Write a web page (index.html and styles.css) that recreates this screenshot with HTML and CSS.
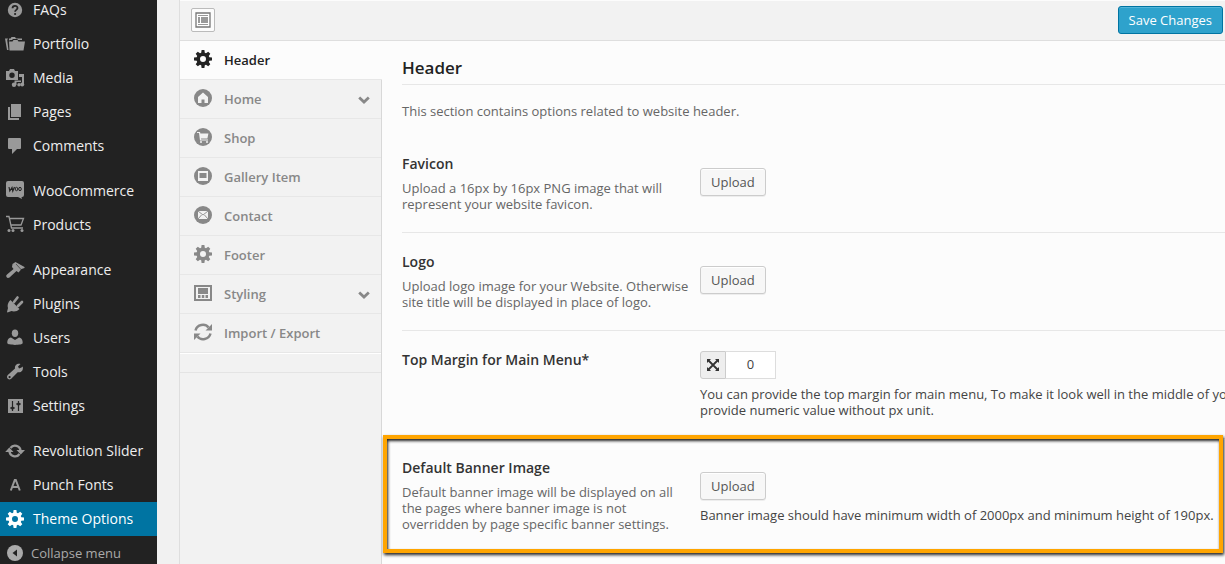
FILE: index.html
```html
<!DOCTYPE html>
<html lang="en">
<head>
<meta charset="utf-8">
<title>Theme Options</title>
<link rel="stylesheet" href="styles.css">
</head>
<body>
<svg class="sprite" aria-hidden="true">
  <symbol id="gear" viewBox="0 0 18 18"><path fill-rule="evenodd" d="M7.6 0h2.8l.4 2.700 1.200.5L14.200 1.700l2.100 2.100-1.500 2.200.5 1.200 2.700.4v2.800l-2.700.4-.5 1.200 1.500 2.200-2.100 2.100-2.200-1.500-1.200.5-.4 2.700H7.600l-.4-2.700-1.200-.5-2.200 1.500-2.100-2.100 1.500-2.200-.5-1.200L0 10.400V7.600l2.700-.4.500-1.200-1.500-2.200 2.100-2.100L6 3.200l1.200-.5zM9 6a3 3 0 1 0 0 6 3 3 0 0 0 0-6z"/></symbol>
  <symbol id="chevron" viewBox="0 0 12 8"><path d="M1.200 1.500 6 6l4.800-4.500" fill="none" stroke="currentColor" stroke-width="2.800"/></symbol>
</svg>
<div class="app">
  <nav class="menu" aria-label="Admin menu">
    <ul class="menu-list">
      <li><a class="menu-item" href="#"><svg viewBox="0 0 20 20"><circle cx="10" cy="10" r="7.200"/><path class="cut-line" d="M7.500 8.300c0-3.200 5-3.200 5-.2 0 1.900-2.400 1.700-2.400 3.700" stroke-width="1.800"/><circle class="cut" cx="10.100" cy="14" r="1.100"/></svg>FAQs</a></li>
      <li><a class="menu-item" href="#"><svg viewBox="0 0 20 20"><path d="M0 4.500h3L2.200 6l1.300 10H2zM4 4.500h1.500L6.500 3h3.500l1 1.500h6V6H13l-.7-1H8L7 6H4.500L4 8z"/><path d="M4 7.500h3.500l1-1.500h4l1 1.500H20l-1.500 9h-14z"/></svg>Portfolio</a></li>
      <li><a class="menu-item" href="#"><svg viewBox="0 0 20 20"><path fill-rule="evenodd" d="M1 3h3l1-2h4l1 2h3v9H1zM7 4.500a2.700 2.700 0 1 0 0 5.400 2.700 2.700 0 0 0 0-5.400z"/><path d="M14 6h5v10.500h-2V9h-3zM9.500 12.500H16v1.500h-4.500v3h-2z"/><circle cx="9" cy="16.700" r="2.200"/><circle cx="14" cy="16.700" r="1.700"/><circle cx="17.200" cy="16.500" r="2"/></svg>Media</a></li>
      <li><a class="menu-item" href="#"><svg viewBox="0 0 20 20"><path d="M6 2h10v13H6zM3 5h2v11h9v2H3z"/></svg>Pages</a></li>
      <li><a class="menu-item" href="#"><svg viewBox="0 0 20 20"><path d="M4 2h11a1 1 0 0 1 1 1v9a1 1 0 0 1-1 1h-3l-5 5v-5H4a1 1 0 0 1-1-1V3a1 1 0 0 1 1-1z"/></svg>Comments</a></li>
      <li class="group"><a class="menu-item" href="#"><svg viewBox="0 0 20 20"><path d="M3 0h14a2 2 0 0 1 2 2v12a2 2 0 0 1-2 2h-.5l.5 2-4-2H3a2 2 0 0 1-2-2V2a2 2 0 0 1 2-2z"/><path class="cut-line" d="m4 6 .8 4L7 6.500l.8 3.500L9.500 6" stroke-width="1.200"/><ellipse class="cut-line" cx="11.500" cy="8" rx="1.300" ry="1.700"/><ellipse class="cut-line" cx="15" cy="8" rx="1.300" ry="1.700"/></svg>WooCommerce</a></li>
      <li><a class="menu-item" href="#"><svg viewBox="0 0 20 20"><path class="line" d="M1 1.500h3L6.500 13H18M5 3.500h13.500L16 10H6.500" stroke-width="1.300"/><circle cx="4" cy="15.500" r="1.500"/><circle cx="8" cy="15.500" r="1.500"/><circle cx="17" cy="15.500" r="1.500"/></svg>Products</a></li>
      <li class="group"><a class="menu-item" href="#"><svg viewBox="0 0 20 20"><path d="m7.500 4 3-2 9 5v1l-3 1-3 3.500-2-1.500-7 6.500q-2 1-3-.5t.5-2.500L8.500 9 7 7z"/><path class="cut-line" d="m11 4 5.500 6" stroke-width=".6"/></svg>Appearance</a></li>
      <li><a class="menu-item" href="#"><svg viewBox="0 0 20 20"><path d="m5.500 6 9 9c-2 2.500-6 3-8 2L2.500 18.500 2 18l1-4c-1-3 .5-6.500 2.500-8z"/><path class="line" d="m9 8 3.500-4.500M13 12l4-4" stroke-width="2.600" stroke-linecap="round"/></svg>Plugins</a></li>
      <li><a class="menu-item" href="#"><svg viewBox="0 0 20 20"><ellipse cx="10" cy="5.200" rx="3.200" ry="3.700"/><path d="M6 9.500 10 12l4-2.500c3 .5 3.700 3 3.700 5.500 0 2.500-15.400 2.500-15.400 0 0-2.500.7-5 3.700-5.500z"/></svg>Users</a></li>
      <li><a class="menu-item" href="#"><svg viewBox="0 0 20 20"><path fill-rule="evenodd" d="M16.500 5.500 14 6.500l-1-2L15.500 2c-3-1-6 1-5.500 4.500L2.800 13c-2.300 2.500 1 6 3.400 3.700l6.500-6.500c3.500.8 6-2 5-5.700zM4.600 14a1.100 1.100 0 1 1 0 2.200 1.100 1.100 0 0 1 0-2.200z"/></svg>Tools</a></li>
      <li><a class="menu-item" href="#"><svg viewBox="0 0 20 20"><path d="M3 3h15v14H3z"/><path class="cut-line" d="M7.500 5v10M5 12h5M13.500 5v10M11 8h5" stroke-width="1.200"/><circle class="cut" cx="7.500" cy="12" r="1.500"/><circle class="cut" cx="13.500" cy="8" r="1.500"/></svg>Settings</a></li>
      <li class="group"><a class="menu-item" href="#"><svg viewBox="0 0 20 20"><path class="line" d="M5.500 7A5.500 5.500 0 0 1 15.500 10M14.500 13A5.500 5.500 0 0 1 4.500 10" stroke-width="2.400"/><path d="M11.500 9H20l-4.200 4.500zM.2 11h8.300L4.300 6.500z"/></svg>Revolution Slider</a></li>
      <li><a class="menu-item" href="#"><svg viewBox="0 0 20 20"><path class="line" d="m5.800 15.500 4-10.500h1l4 10.500M7 12h6.500" stroke-width="2"/></svg>Punch Fonts</a></li>
      <li><a class="menu-item current" href="#" aria-current="page"><svg viewBox="-1 -1 20 20"><use href="#gear" width="18" height="18"/></svg>Theme Options</a></li>
      <li><button class="menu-item collapse" type="button"><svg viewBox="0 0 20 20"><circle cx="10" cy="10" r="8"/><path class="cut" d="M12 6.500v7L7.500 10z"/></svg>Collapse menu</button></li>
    </ul>
  </nav>
  <main class="panel">
    <header class="toolbar">
      <button class="layout-btn" type="button" aria-label="Toggle layout"><svg viewBox="0 0 16 16"><path d="M1 1h14v14H1z" fill="#fff" stroke="#777" stroke-width="1.300"/><path d="M3 3h10v1H3zM3 12h10v1H3zM3 5h2v6H3zM6 5h7v6H6z"/></svg></button>
      <button class="save" type="button">Save Changes</button>
    </header>
    <div class="body">
      <nav class="tabs" aria-label="Option sections">
        <a class="tab active" href="#"><svg viewBox="0 0 18 18"><use href="#gear"/></svg>Header</a>
        <a class="tab" href="#"><svg viewBox="0 0 18 18"><circle cx="9" cy="9" r="9"/><path class="cut" d="M9 3.500 14 8v6h-3.500v-3.500h-3V14H4V8z"/></svg>Home<svg class="chevron"><use href="#chevron"/></svg></a>
        <a class="tab" href="#"><svg viewBox="0 0 18 18"><circle cx="9" cy="9" r="9"/><path class="cut" d="M3 4h3l.4 1.500h8l-1 5H7l.2 1H14v1H6L5 5H3z"/><circle class="cut" cx="7" cy="14" r="1"/><circle class="cut" cx="13" cy="14" r="1"/></svg>Shop</a>
        <a class="tab" href="#"><svg viewBox="0 0 18 18"><circle cx="9" cy="9" r="9"/><path class="cut" fill-rule="evenodd" d="M4 4h10v10H4zM5.500 6v5h7V6z"/></svg>Gallery Item</a>
        <a class="tab" href="#"><svg viewBox="0 0 18 18"><circle cx="9" cy="9" r="9"/><path class="cut" d="M4 5h10v8H4z"/><path d="m4 5 5 4 5-4M4 13l3.500-4M14 13l-3.500-4" fill="none" stroke="#888" stroke-width=".9"/></svg>Contact</a>
        <a class="tab" href="#"><svg viewBox="0 0 18 18"><use href="#gear"/></svg>Footer</a>
        <a class="tab" href="#"><svg viewBox="0 0 18 18"><path fill-rule="evenodd" d="M0 1h18v16H0zM2 3v12h14V3z"/><path d="M4 4h10v6H4zM4 11h2.500v3H4zM7.800 11h2.500v3H7.800zM11.500 11H14v3h-2.500z"/></svg>Styling<svg class="chevron"><use href="#chevron"/></svg></a>
        <a class="tab" href="#"><svg viewBox="0 0 18 18"><path class="line" d="M1.500 7.500C3 1.500 11 0 14.500 4.500M16.500 10.500C15 16.500 7 18 3.500 13.500" stroke-width="2.500"/><path d="M18 1v6.500h-6.500zM0 17v-6.500h6.500z"/></svg>Import / Export</a>
        <div class="tabs-end"></div>
      </nav>
      <section class="content">
        <h1>Header</h1>
        <p class="intro">This section contains options related to website header.</p>
        <div class="row">
          <div class="info"><h2>Favicon</h2><p>Upload a 16px by 16px PNG image that will represent your website favicon.</p></div>
          <div class="field"><button class="upload" type="button">Upload</button></div>
        </div>
        <div class="row">
          <div class="info"><h2>Logo</h2><p>Upload logo image for your Website. Otherwise site title will be displayed in place of logo.</p></div>
          <div class="field"><button class="upload" type="button">Upload</button></div>
        </div>
        <div class="row">
          <div class="info"><h2><label for="margin">Top Margin for Main Menu*</label></h2></div>
          <div class="field high">
            <div class="number"><span class="addon"><svg viewBox="0 0 14 14"><path d="m2 2 10 10M12 2 2 12" fill="none" stroke="#333" stroke-width="1.800"/><path d="M1 1h4L1 5zM13 1H9l4 4zM1 13h4L1 9zM13 13H9l4-4z" fill="#333"/></svg></span><input id="margin" type="text" value="0"></div>
            <p class="hint">You can provide the top margin for main menu, To make it look well in the middle of your<br>provide numeric value without px unit.</p>
          </div>
        </div>
        <div class="row marked">
          <div class="info"><h2>Default Banner Image</h2><p>Default banner image will be displayed on all the pages where banner image is not overridden by page specific banner settings.</p></div>
          <div class="field"><button class="upload" type="button">Upload</button>
            <p class="hint">Banner image should have minimum width of 2000px and minimum height of 190px.</p></div>
        </div>
      </section>
    </div>
  </main>
</div>
</body>
</html>
```
FILE: styles.css
```css
* { box-sizing: border-box; }
html, body { height: 100%; }
body {
  margin: 0;
  overflow: hidden;
  background: #f1f1f1;
  color: #444;
  font: 13px/16px "Open Sans", "Noto Sans", sans-serif;
}
h1, h2, p, ul { margin: 0; padding: 0; font-weight: inherit; }
a { color: inherit; text-decoration: none; }
button, input { font: inherit; color: inherit; }
svg { fill: currentColor; flex: none; }
.sprite { position: absolute; width: 0; height: 0; }
.line { fill: none; stroke: currentColor; }

.app { display: flex; min-height: 100%; }

/* Admin menu */
.menu { flex: none; width: 157px; background: #222; color: #eee; }
.menu-list { list-style: none; margin-top: -7px; }
.group { margin-top: 11px; }
.menu-item {
  display: flex;
  align-items: center;
  gap: 8px;
  width: 100%;
  height: 34px;
  padding: 0 0 0 5px;
  border: 0;
  background: none;
  font-size: 14px;
  white-space: nowrap;
}
.menu-item svg { width: 20px; height: 20px; color: #999; }
.menu .cut { fill: #222; }
.menu .cut-line { fill: none; stroke: #222; }
.menu-item.current { background: #0074a2; color: #fff; }
.menu-item.current svg { color: #fff; }
.menu-item.collapse { gap: 6px; font-size: 13px; color: #aaa; }
.menu-item.collapse svg { color: #aaa; }

/* Options panel */
.panel {
  flex: 1;
  min-width: 0;
  display: flex;
  flex-direction: column;
  margin-left: 22px;
  border-left: 1px solid #dedede;
  overflow: hidden;
}
.toolbar {
  display: flex;
  align-items: center;
  justify-content: space-between;
  height: 41px;
  padding: 0 2px 2px 11px;
  background: #f2f2f2;
  border-top: 1px solid #fcfcfc;
  border-bottom: 1px solid #dedede;
}
.layout-btn {
  display: flex;
  padding: 3px;
  border: 1px solid #bbb;
  border-radius: 2px;
  background: #fcfcfc;
  color: #999;
}
.layout-btn svg { width: 16px; height: 16px; }
.save {
  height: 28px;
  padding: 0 10px;
  border: 1px solid #0074a2;
  border-radius: 3px;
  background: #2ea2cc;
  box-shadow: inset 0 1px 0 rgba(120, 200, 230, .5);
  color: #fff;
}
.body { flex: 1; display: flex; }

.tabs {
  flex: none;
  width: 202px;
  background: linear-gradient(#f2f2f2 330px, #f9f9f9 380px, #f1f1f1 400px);
  background: #f2f2f2;
  border-right: 1px solid #d8d8d8;
}
.tab {
  display: flex;
  align-items: center;
  gap: 12px;
  height: 39px;
  padding: 0 11px 0 14px;
  border-bottom: 1px solid #e7e7e7;
  font-weight: 600;
  color: #888;
}
.tab > svg { width: 18px; height: 18px; margin-bottom: 2px; }
.tab .cut { fill: #f2f2f2; }
.tab > .chevron { width: 12px; height: 8px; margin: 2px 0 0 auto; }
.tab.active { margin-right: -1px; background: #fcfcfc; color: #222; }
.tabs-end { height: 20px; border-top: 1px solid #fff; border-bottom: 1px solid #e4e4e4; }

.content { flex: 1; min-width: 0; padding: 13px 0 0 20px; background: #fcfcfc; }
h1 {
  height: 31px;
  padding-top: 4px;
  border-bottom: 1px solid #e7e7e7;
  font-size: 17px;
  line-height: 20px;
  font-weight: 600;
  color: #222;
}
.intro { margin: 18px 0 16px; color: #666; }
.row { display: flex; min-height: 98px; border-bottom: 1px solid #e7e7e7; }
.info { flex: none; width: 298px; padding: 19px 8px 20px 0; color: #666; }
h2 { font-size: 14px; line-height: 20px; font-weight: 600; color: #333; }
.info p { margin-top: 6px; }
.field { flex: 1; min-width: 0; padding-top: 33px; }
.field.high { padding: 20px 0; }
.upload {
  height: 28px;
  padding: 0 10px;
  border: 1px solid #ccc;
  border-radius: 3px;
  background: #f7f7f7;
  box-shadow: inset 0 1px 0 #fff, 0 1px 0 rgba(0, 0, 0, .06);
  color: #555;
}
.hint { margin-top: 7px; white-space: nowrap; }
.number { display: flex; height: 28px; }
.addon {
  display: flex;
  align-items: center;
  justify-content: center;
  width: 26px;
  border: 1px solid #ccc;
  border-radius: 3px 0 0 3px;
  background: #eee;
}
.addon svg { width: 14px; height: 14px; }
.number input {
  width: 50px;
  padding: 0 0 2px;
  border: 1px solid #ddd;
  border-left: 0;
  background: #fff;
  text-align: center;
}

/* Highlight frame around the marked row */
.row.marked { position: relative; border-bottom: 0; }
.marked::after {
  content: "";
  position: absolute;
  inset: -4px 2px -1px -19px;
  border: 4px solid #ffa500;
  box-shadow: 1px 2px 3px #222, inset 1px 2px 3px #222;
  pointer-events: none;
}
```
